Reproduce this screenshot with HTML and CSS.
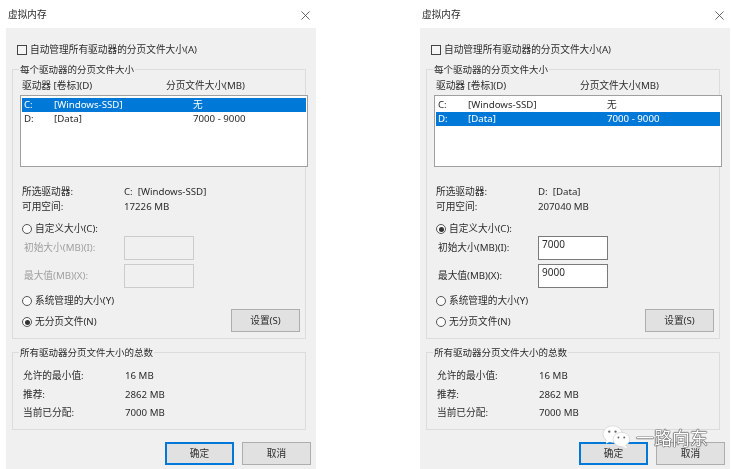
FILE: index.html
```
<!DOCTYPE html>
<html lang="zh-CN">
<head>
<meta charset="utf-8">
<title>虚拟内存</title>
<link rel="stylesheet" href="styles.css">
</head>
<body>
<main class="page">
  <section class="dialog">
    <header class="titlebar"><span>虚拟内存</span><svg class="close" viewBox="0 0 10 10"><path d="M0.5 0.5L9.5 9.5M9.5 0.5L0.5 9.5"/></svg></header>
    <div class="client">
      <div class="check-row"><span class="checkbox"></span><span>自动管理所有驱动器的分页文件大小(A)</span></div>
      <div class="group group-drives">
        <span class="legend">每个驱动器的分页文件大小</span>
        <div class="columns"><span>驱动器 [卷标](D)</span><span>分页文件大小(MB)</span></div>
        <div class="list">
          <div class="row selected"><span class="c1">C:</span><span class="c2">[Windows-SSD]</span><span>无</span></div>
          <div class="row"><span class="c1">D:</span><span class="c2">[Data]</span><span>7000 - 9000</span></div>
        </div>
        <div class="info first"><span class="info-label">所选驱动器:</span><span>C:&nbsp; [Windows-SSD]</span></div>
        <div class="info"><span class="info-label">可用空间:</span><span>17226 MB</span></div>
        <div class="radio-row custom"><span class="radio"></span><span>自定义大小(C):</span></div>
        <div class="field disabled"><label>初始大小(MB)(I):</label><span class="input"></span></div>
        <div class="field disabled second"><label>最大值(MB)(X):</label><span class="input"></span></div>
        <div class="lower">
          <div>
            <div class="radio-row"><span class="radio"></span><span>系统管理的大小(Y)</span></div>
            <div class="radio-row gap"><span class="radio on"></span><span>无分页文件(N)</span></div>
          </div>
          <button class="btn set">设置(S)</button>
        </div>
      </div>
      <div class="group group-total">
        <span class="legend">所有驱动器分页文件大小的总数</span>
        <div class="total"><span class="total-label">允许的最小值:</span><span>16 MB</span></div>
        <div class="total"><span class="total-label">推荐:</span><span>2862 MB</span></div>
        <div class="total"><span class="total-label">当前已分配:</span><span>7000 MB</span></div>
      </div>
      <footer class="footer"><button class="btn default">确定</button><button class="btn">取消</button></footer>
    </div>
  </section>
  <section class="dialog">
    <header class="titlebar"><span>虚拟内存</span><svg class="close" viewBox="0 0 10 10"><path d="M0.5 0.5L9.5 9.5M9.5 0.5L0.5 9.5"/></svg></header>
    <div class="client">
      <div class="check-row"><span class="checkbox"></span><span>自动管理所有驱动器的分页文件大小(A)</span></div>
      <div class="group group-drives">
        <span class="legend">每个驱动器的分页文件大小</span>
        <div class="columns"><span>驱动器 [卷标](D)</span><span>分页文件大小(MB)</span></div>
        <div class="list">
          <div class="row"><span class="c1">C:</span><span class="c2">[Windows-SSD]</span><span>无</span></div>
          <div class="row selected"><span class="c1">D:</span><span class="c2">[Data]</span><span>7000 - 9000</span></div>
        </div>
        <div class="info first"><span class="info-label">所选驱动器:</span><span>D:&nbsp; [Data]</span></div>
        <div class="info"><span class="info-label">可用空间:</span><span>207040 MB</span></div>
        <div class="radio-row custom"><span class="radio on"></span><span>自定义大小(C):</span></div>
        <div class="field"><label>初始大小(MB)(I):</label><span class="input">7000</span></div>
        <div class="field second"><label>最大值(MB)(X):</label><span class="input">9000</span></div>
        <div class="lower">
          <div>
            <div class="radio-row"><span class="radio"></span><span>系统管理的大小(Y)</span></div>
            <div class="radio-row gap"><span class="radio"></span><span>无分页文件(N)</span></div>
          </div>
          <button class="btn set">设置(S)</button>
        </div>
      </div>
      <div class="group group-total">
        <span class="legend">所有驱动器分页文件大小的总数</span>
        <div class="total"><span class="total-label">允许的最小值:</span><span>16 MB</span></div>
        <div class="total"><span class="total-label">推荐:</span><span>2862 MB</span></div>
        <div class="total"><span class="total-label">当前已分配:</span><span>7000 MB</span></div>
      </div>
      <footer class="footer"><button class="btn default">确定</button><button class="btn">取消</button></footer>
    </div>
  </section>
  <div class="watermark">
    <svg class="wechat" viewBox="0 0 30 26">
      <ellipse cx="11" cy="10" rx="10" ry="8.6" fill="#fff" stroke="#c8c8c8" stroke-width=".6"/>
      <path d="M5 16l-1 4 5-2.5z" fill="#fff"/>
      <ellipse cx="20" cy="15.5" rx="8.6" ry="7.4" fill="#fff" stroke="#c8c8c8" stroke-width=".6"/>
      <path d="M24 21l2 4-5-2.5z" fill="#fff"/>
      <circle cx="7.5" cy="7.5" r="1.2" fill="#666"/><circle cx="14" cy="7.5" r="1.2" fill="#666"/>
      <circle cx="17" cy="13.5" r="1" fill="#666"/><circle cx="23" cy="13.5" r="1" fill="#666"/>
    </svg>
    <span>一路向东</span>
  </div>
</main>
</body>
</html>
```
FILE: styles.css
```
* { box-sizing: border-box; }
html, body { margin: 0; padding: 0; background: #fff; }
body {
  width: 732px;
  height: 469px;
  overflow: hidden;
  font-family: "Noto Sans", "Noto Sans CJK SC", sans-serif;
  font-size: 9.7px;
  line-height: 12px;
  color: #2c2c2c;
}
.page {
  position: relative;
  display: flex;
  gap: 96px;
  height: 469px;
  filter: blur(0.4px);
}
.dialog { width: 318px; flex: none; }
.titlebar {
  height: 28px;
  padding: 9px 8px 0 8px;
  display: flex;
  justify-content: space-between;
}
.close { width: 9px; height: 9px; margin-top: 2px; fill: none; stroke: #444; stroke-width: 0.9; }
.client {
  margin-left: 6px;
  width: 309.5px;
  height: 441px;
  background: #f0f0f0;
  padding: 16px 0 0 6px;
}
.check-row { display: flex; align-items: center; gap: 3px; padding-left: 5px; height: 12px; }
.checkbox { width: 10px; height: 10px; border: 1px solid #444; background: #f5f5f5; }
.group {
  position: relative;
  width: 294px;
  border: 1px solid #dcdcdc;
}
.legend {
  position: absolute;
  left: 6px;
  top: -6px;
  padding: 0 1px;
  background: #f0f0f0;
  font-size: 9.5px;
}
.group-drives { margin-top: 13px; height: 270px; padding: 10px 0 0 9px; }
.columns { display: flex; height: 12px; }
.columns span:first-child { width: 144px; }
.list {
  width: 288px;
  height: 72px;
  margin: 3px 0 0 -2px;
  background: #fff;
  border: 1px solid #a0a0a0;
  padding: 1.5px 1px 1px;
}
.row { display: flex; height: 14px; line-height: 14px; padding-left: 2px; }
.row.selected { background: #0078d7; color: #fff; }
.c1 { width: 30px; }
.c2 { width: 139px; }
.info { display: flex; height: 15px; line-height: 15px; }
.info.first { margin-top: 17px; }
.info-label { width: 102px; }
.radio-row { display: flex; align-items: center; gap: 3px; height: 12px; }
.radio-row.custom { margin-top: 9px; }
.radio-row.gap { margin-top: 9px; }
.radio {
  position: relative;
  width: 10px;
  height: 10px;
  border: 1px solid #555;
  border-radius: 50%;
  background: #fbfbfb;
}
.radio.on::after {
  content: "";
  position: absolute;
  left: 1.5px;
  top: 1.5px;
  width: 5px;
  height: 5px;
  border-radius: 50%;
  background: #333;
}
.field { display: flex; align-items: center; height: 25px; padding-left: 2px; }
.field label { width: 100px; }
.field.second { margin-top: 3px; }
.input {
  width: 70px;
  height: 24px;
  border: 1px solid #7a7a7a;
  background: #fff;
  padding: 1px 3px;
  font-size: 10px;
}
.field.disabled { color: #a0a0a0; }
.field.disabled .input { border-color: #ccc; background: #f0f0f0; }
.lower { display: flex; justify-content: space-between; margin-top: 7px; width: 278px; }
.btn {
  font: inherit;
  color: #2c2c2c;
  width: 69px;
  height: 23px;
  padding: 0;
  border: 1px solid #adadad;
  background: #e1e1e1;
  border-radius: 0;
}
.btn.default { border: 2px solid #0078d7; }
.set { align-self: flex-end; margin-bottom: -4px; }
.group-total { margin-top: 13px; height: 78px; padding: 17px 0 0 10px; }
.total { display: flex; height: 18.5px; line-height: 12px; }
.total-label { width: 102px; }
.footer { display: flex; gap: 8px; margin: 12px 0 0 153px; }
.watermark {
  position: absolute;
  left: 602px;
  top: 424px;
  display: flex;
  align-items: center;
  gap: 5px;
  font-family: "Noto Sans CJK SC", sans-serif;
  font-size: 18px;
  line-height: 24px;
  color: #fff;
  text-shadow: 0 0 1px #222, 0 0 1px #222, 0 0 1px #222;
}
.wechat { width: 29px; height: 26px; }
```
